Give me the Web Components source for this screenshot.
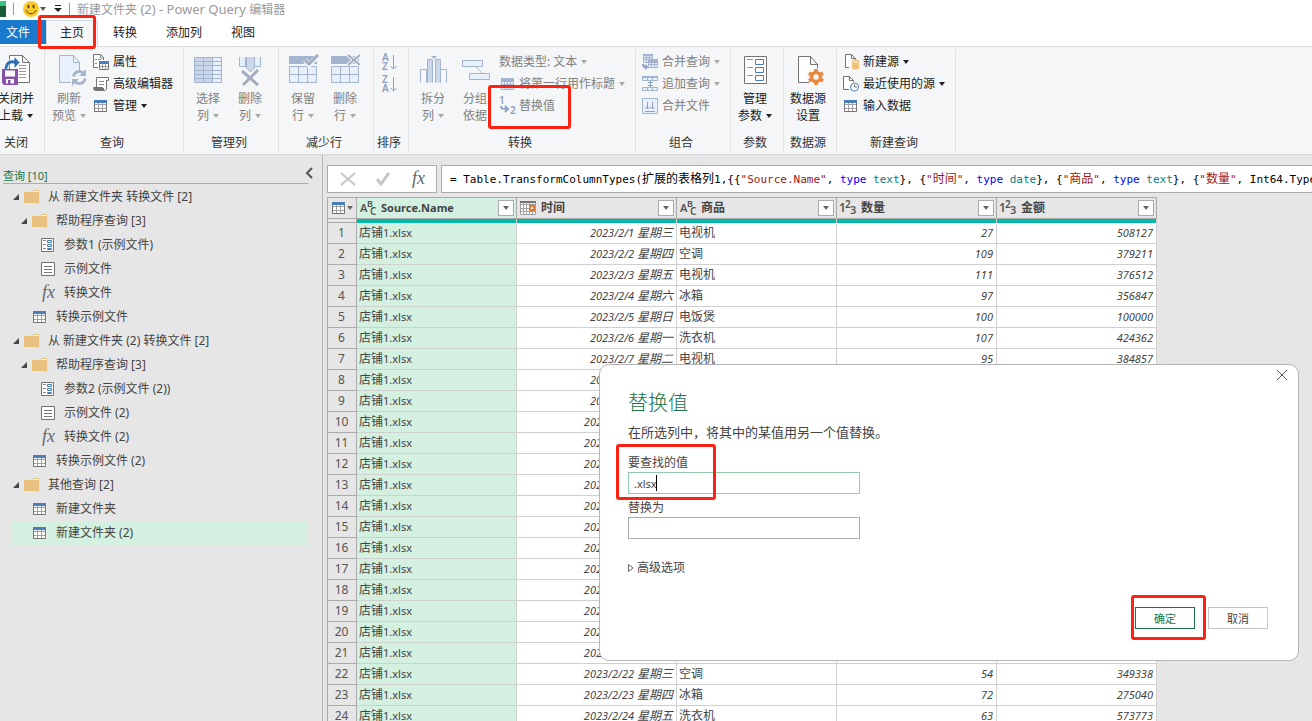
<!DOCTYPE html>
<html lang="zh-CN">
<head>
<meta charset="utf-8">
<title>新建文件夹 (2) - Power Query 编辑器</title>
<style>
html, body {
  height: 100%;
  margin: 0;
}
body {
  overflow: hidden;
  font-family: "Noto Sans", "Noto Sans CJK SC", sans-serif;
  font-size: 12px;
  line-height: 16px;
  color: #444;
  background: #e6e6e6;
}
</style>
</head>
<body>
<pq-app>
  <pq-title-bar slot="title">新建文件夹<span> (2) - Power Query </span>编辑器</pq-title-bar>

  <pq-tabs slot="tabs">
    <pq-tab kind="file">文件</pq-tab>
    <pq-callout style="--inset: -5px 2px -3px -8px"><pq-tab kind="selected">主页</pq-tab></pq-callout>
    <pq-tab>转换</pq-tab>
    <pq-tab>添加列</pq-tab>
    <pq-tab>视图</pq-tab>
  </pq-tabs>

  <pq-ribbon slot="ribbon">
    <pq-group label="关闭">
      <pq-big-button icon="closeLoad" first="关闭并" second="上载" menu></pq-big-button>
    </pq-group>
    <pq-group label="查询">
      <pq-big-button icon="refresh" first="刷新" second="预览" menu disabled></pq-big-button>
      <pq-stack>
        <pq-small-button icon="properties">属性</pq-small-button>
        <pq-small-button icon="script">高级编辑器</pq-small-button>
        <pq-small-button icon="table" menu>管理</pq-small-button>
      </pq-stack>
    </pq-group>
    <pq-group label="管理列">
      <pq-big-button icon="chooseColumns" first="选择" second="列" menu disabled></pq-big-button>
      <pq-big-button icon="removeColumns" first="删除" second="列" menu disabled></pq-big-button>
    </pq-group>
    <pq-group label="减少行">
      <pq-big-button icon="keepRows" first="保留" second="行" menu disabled></pq-big-button>
      <pq-big-button icon="removeRows" first="删除" second="行" menu disabled></pq-big-button>
    </pq-group>
    <pq-group label="排序">
      <pq-stack>
        <pq-small-button icon="sortAsc" title="升序排序" disabled></pq-small-button>
        <pq-small-button icon="sortDesc" title="降序排序" disabled></pq-small-button>
      </pq-stack>
    </pq-group>
    <pq-group label="转换">
      <pq-big-button icon="split" first="拆分" second="列" menu disabled></pq-big-button>
      <pq-big-button icon="groupBy" first="分组" second="依据" disabled></pq-big-button>
      <pq-stack>
        <pq-small-button menu disabled>数据类型: 文本</pq-small-button>
        <pq-small-button icon="promote" menu disabled>将第一行用作标题</pq-small-button>
        <pq-callout style="--inset: -10px -13px -12px -8px"><pq-small-button icon="replace" disabled>替换值</pq-small-button></pq-callout>
      </pq-stack>
    </pq-group>
    <pq-group label="组合">
      <pq-stack>
        <pq-small-button icon="merge" menu disabled>合并查询</pq-small-button>
        <pq-small-button icon="append" menu disabled>追加查询</pq-small-button>
        <pq-small-button icon="combine" disabled>合并文件</pq-small-button>
      </pq-stack>
    </pq-group>
    <pq-group label="参数">
      <pq-big-button icon="parameters" first="管理" second="参数" menu></pq-big-button>
    </pq-group>
    <pq-group label="数据源">
      <pq-big-button icon="sourceSettings" first="数据源" second="设置"></pq-big-button>
    </pq-group>
    <pq-group label="新建查询">
      <pq-stack>
        <pq-small-button icon="newSource" menu>新建源</pq-small-button>
        <pq-small-button icon="recent" menu>最近使用的源</pq-small-button>
        <pq-small-button icon="table">输入数据</pq-small-button>
      </pq-stack>
    </pq-group>
  </pq-ribbon>

  <pq-queries slot="side" heading="查询 [10]">
    <pq-query level="0" icon="folder" open>从 新建文件夹 转换文件 [2]</pq-query>
    <pq-query level="1" icon="folder" open>帮助程序查询 [3]</pq-query>
    <pq-query level="2" icon="paramItem">参数1 (示例文件)</pq-query>
    <pq-query level="2" icon="textItem">示例文件</pq-query>
    <pq-query level="2" icon="fx">转换文件</pq-query>
    <pq-query level="1" icon="table">转换示例文件</pq-query>
    <pq-query level="0" icon="folder" open>从 新建文件夹 (2) 转换文件 [2]</pq-query>
    <pq-query level="1" icon="folder" open>帮助程序查询 [3]</pq-query>
    <pq-query level="2" icon="paramItem">参数2 (示例文件 (2))</pq-query>
    <pq-query level="2" icon="textItem">示例文件 (2)</pq-query>
    <pq-query level="2" icon="fx">转换文件 (2)</pq-query>
    <pq-query level="1" icon="table">转换示例文件 (2)</pq-query>
    <pq-query level="0" icon="folder" open>其他查询 [2]</pq-query>
    <pq-query level="1" icon="table">新建文件夹</pq-query>
    <pq-query level="1" icon="table" selected>新建文件夹 (2)</pq-query>
  </pq-queries>

  <pq-formula-bar slot="main"></pq-formula-bar>
  <pq-grid slot="main"></pq-grid>
  <pq-replace-dialog slot="dialog"></pq-replace-dialog>
</pq-app>

<script>
// faded variants are used by disabled ribbon commands
const LINE = "#737373";
const BLUE = "#4a7ebb";
const FADE = "#a3b4d0";
const PALE = "#e8f0fc";

const grid = (x, y, w, h, cols, rows, stroke) => {
  let d = `M${x} ${y}h${w}v${h}h${-w}z`;
  for (let i = 1; i < cols; i++) d += `M${x + Math.round(w * i / cols)} ${y}v${h}`;
  for (let i = 1; i < rows; i++) d += `M${x} ${y + Math.round(h * i / rows)}h${w}`;
  return `<path d="${d}" stroke="${stroke}"/>`;
};

// [width, height, markup]
const ICONS = {
  closeLoad: [32, 32, `
    <path fill="#fff" stroke="${LINE}" d="M9.500 2.500h13l7 7v20h-20zM22.500 2.500v7h7"/>
    <path stroke="#999" d="M19 12.500h7M19 15.500h7M19 18.500h7M19 21.500h7M19 24.500h7"/>
    <path fill="#2f6fad" stroke="#fff" d="M4 17C4 9 9 6 14 7V3l6 6.500-6 6.500v-5c-4-1-6 1-6.500 6z"/>
    <path fill="#8651a8" d="M2 16h16v16H4l-2-2z"/><path fill="#fff" d="M5 17.500h10v6H5zM6 26h8v4.500H6z"/><path fill="#8651a8" d="M8 27h2.500v4H8z"/>`],
  refresh: [32, 32, `
    <path fill="${PALE}" stroke="${FADE}" d="M6.500 2.500h14l6 7v20h-20zM20.500 2.500v7h6"/>
    <path fill="#f5f6f7" d="M18 18h16v13H18z"/>
    <path stroke="#a5b5ce" stroke-width="3" d="M20.500 23.500c1-6 8-6 10-3M32 25.500c-1 6-8 6-10 3"/>
    <path fill="#a5b5ce" d="M33 16v7h-7zM19 33v-7h7z"/>`],
  chooseColumns: [32, 32, `
    <path fill="${PALE}" d="M2.500 4.500h27v25h-27z"/><path fill="#cbd6e8" d="M2 4h18v26H2z"/>
    ${grid(2.5, 4.5, 27, 25, 3, 6, FADE)}`],
  removeColumns: [32, 32, `
    <path fill="${PALE}" stroke="${FADE}" d="M5.500 4v9.500h6V4M20.500 4v9.500h6V4"/>
    <path fill="#cbd6e8" stroke="${FADE}" d="M12.500 4v11l4 4 4-4V4"/>
    <path stroke="#a3acbd" stroke-width="3" d="M8 18l16 14M24 17L9 32"/>`],
  keepRows: [32, 32, `
    <path fill="${PALE}" d="M2 13h28v17H2z"/><path fill="${FADE}" d="M2 3h28v8H2z"/>
    ${grid(2.5, 13.5, 27, 16, 3, 2, FADE)}
    <path stroke="#f5f6f7" stroke-width="5" d="M18 7l4 5 9-9"/><path stroke="#a3acbd" stroke-width="3" d="M18 7l4 4 9-9"/>`],
  removeRows: [32, 32, `
    <path fill="${PALE}" d="M2 13h28v17H2z"/><path fill="${FADE}" d="M2 3h28v8H2z"/>
    ${grid(2.5, 13.5, 27, 16, 3, 2, FADE)}
    <path stroke="#f5f6f7" stroke-width="4" d="M19 2l12 10M31 2L19 12"/><path stroke="#a3acbd" stroke-width="2" d="M19 2l12 10M31 2L19 12"/>`],
  split: [32, 32, `
    <path fill="#f5f9ff" stroke="${FADE}" d="M3.500 29.500v-13h6v13M23.500 29.500v-13h6v13"/>
    <path fill="#cbd6e8" stroke="${FADE}" d="M10.500 29.500v-23h5v23M18.500 29.500v-23h5v23"/>
    <path fill="${FADE}" d="M14 3h6l-3 3z"/>`],
  groupBy: [32, 32, `
    <path fill="${PALE}" stroke="${FADE}" d="M3.500 7.500h20v6h-20zM10.500 20.500h20v6h-20zM17 14l6 6"/>`],
  parameters: [32, 32, `
    <path fill="#fff" stroke="${LINE}" d="M5.500 3.500h22v27h-22z"/>
    <path stroke="#999" d="M8 6.500h6M8 14.500h6M8 22.500h6"/>
    <path stroke="${BLUE}" d="M16.500 6.500h8v5h-8zM16.500 14.500h8v5h-8zM16.500 22.500h8v5h-8z"/>`],
  sourceSettings: [32, 32, `
    <path fill="#fff" stroke="${LINE}" d="M6.500 3.500h12l7 8v18h-19zM18.500 3.500v8h7"/>
    <circle cx="24" cy="24" r="9" fill="#f5f6f7"/>
    <circle cx="24" cy="24" r="4.500" stroke="#e8893c" stroke-width="3.500"/>
    <path stroke="#e8893c" stroke-width="3.500" d="M24 16v3M24 29v3M17 20l3 2M28 26l3 2M31 20l-3 2M20 26l-3 2"/>`],
  properties: [16, 16, `
    <path fill="#fff" stroke="${LINE}" d="M5 13.500H.5V.5h7l3 3V6"/>
    <path stroke="#888" d="M2 5.500h2M2 9.500h2M5 5.500h3M7.500 1v3h3"/>
    <path fill="#fff" stroke="${LINE}" d="M6.500 7.500h9v8h-9z"/><path fill="${BLUE}" d="M6 7h10v3H6z"/>
    <path stroke="#999" d="M7 12.500h8M9.500 10v5M12.500 10v5"/>`],
  script: [16, 16, `
    <path fill="#fff" stroke="${LINE}" d="M3.500 11V1.500h12v3h-2v8.500c0 1-1 1.500-2 1.500H2.500c-1.500 0-2-1-2-3h9c0 2 .5 3 2 3"/>
    <path stroke="#888" d="M6 5.500h5M6 8.500h5"/><path stroke="${LINE}" stroke-width="2" d="M1 13h10"/>`],
  table: [16, 16, `
    <path fill="#fff" d="M1.500 3h13v11h-13z"/>${grid(1.5, 3.5, 12, 10, 3, 3, "#a0a0a0")}
    <path stroke="${LINE}" d="M1.500 3v10.500h12V3"/><path fill="${BLUE}" d="M1 2h13v3H1z"/>`],
  folder: [16, 16, `<path fill="#fff" stroke="#e9c07d" d="M8.500 3.500l1-2h5v3h-6z"/><path fill="#e9c07d" d="M0 3h15v11H0z"/><path stroke="#fff" d="M9 2.500h5"/>`],
  paramItem: [16, 16, `
    <path fill="#fff" stroke="${LINE}" d="M1.500 1.500h12v13h-12z"/><path stroke="#888" d="M3 3.500h3M3 7.500h3M3 11.500h3"/>
    <path stroke="${BLUE}" d="M7.500 3.500h4v2h-4zM7.500 7.500h4v2h-4zM7.500 11.500h4v1h-4z"/>`],
  textItem: [16, 16, `<path fill="#fff" stroke="${LINE}" d="M1.500 1.500h13v13h-13z"/><path stroke="${LINE}" d="M4 5.500h8M4 8.500h8M4 11.500h8"/>`],
  fx: [16, 16, `<text x="2" y="13" font-family="Liberation Serif" font-style="italic" font-size="18" fill="#666">fx</text>`],
  sortAsc: [16, 16, `
    <text x="2" y="7" font-size="10" font-weight="600" fill="#8ea0c0">A</text><text x="2" y="16" font-size="10" font-weight="600" fill="#8ea0c0">Z</text>
    <path stroke="#8ea0c0" d="M13.500 1v14M10.500 12l3 3 3-3"/>`],
  sortDesc: [16, 16, `
    <text x="2" y="7" font-size="10" font-weight="600" fill="#8ea0c0">Z</text><text x="2" y="16" font-size="10" font-weight="600" fill="#8ea0c0">A</text>
    <path stroke="#8ea0c0" d="M13.500 1v14M10.500 12l3 3 3-3"/>`],
  promote: [16, 16, `<path fill="${PALE}" d="M1 2h14v12H1z"/>${grid(2.5, 2.5, 12, 11, 4, 4, FADE)}<path fill="${FADE}" d="M2 2h13v4H2z"/>`],
  replace: [16, 16, `
    <text x="0" y="6" font-size="10" font-weight="600" fill="#8ea0c0">1</text><text x="11" y="16" font-size="10" font-weight="600" fill="#8ea0c0">2</text>
    <path stroke="#8ea0c0" stroke-width="2" d="M2 8c0 3 1 3 6 3M6 8l3 3-3 3"/>`],
  merge: [16, 16, `
    <path fill="${PALE}" d="M1 1h9v8H1z"/>${grid(1.5, .5, 9, 8, 3, 3, FADE)}<path fill="${FADE}" d="M1 0h10v2H1z"/>
    <path fill="${PALE}" d="M6 6h9v8H6z"/>${grid(6.5, 5.5, 9, 8, 3, 3, FADE)}<path fill="${FADE}" d="M6 5h10v3H6z"/>
    <path stroke="#8ea0c0" stroke-width="2" d="M1 10c0 3 1 3 4 3M3 11l2 2-2 2"/>`],
  append: [16, 16, `
    <path fill="${PALE}" stroke="${FADE}" d="M.5 1.500h15v3H.5zM.5 11.500h15v3H.5zM5.500 1.500v3M10.500 1.500v3M5.500 11.500v3M10.500 11.500v3"/>
    <path fill="${FADE}" d="M0 0h16v2H0z"/><path stroke="#8ea0c0" d="M8.500 5v6M6 6.500h5M6 9.500h5"/>`],
  combine: [16, 16, `
    <path fill="${PALE}" stroke="${FADE}" d="M.5.5h15v15H.5z"/>
    <path stroke="#8ea0c0" d="M5.500 4v7M3.500 9l2 2 2-2M10.500 4v7M8.500 9l2 2 2-2M3 13.500h10"/>`],
  newSource: [16, 16, `
    <path fill="#fff" stroke="${LINE}" d="M6 13.500H2.500V.5h6l4 4V6M8.500.5v4h4"/>
    <path fill="#f0c27b" d="M9 7c0-2 7-2 7 0v7c0 2-7 2-7 0z"/><path stroke="#fff" d="M10 7.500c1 1 4 1 5 0"/>`],
  recent: [16, 16, `
    <path fill="#fff" stroke="${LINE}" d="M6 13.500H.5V.5h6l4 4V6M6.500.5v4h4"/>
    <circle cx="11.500" cy="11" r="4" fill="#fff" stroke="${BLUE}"/><path stroke="${LINE}" d="M11.500 8.500V11H14"/>`],
  typeText: [18, 18, `
    <g font-weight="600" fill="#555"><text x="0" y="13" font-size="11">A</text><text x="7" y="8" font-size="9">B</text><text x="10" y="16" font-size="10">C</text></g>`],
  typeNumber: [18, 18, `
    <g font-weight="600" fill="#555"><text x="-1" y="13" font-size="12">1</text><text x="5" y="9" font-size="10">2</text><text x="10" y="15" font-size="11">3</text></g>`],
  typeDate: [18, 18, `
    <path fill="#fff" d="M1 2h15v14H1z"/>${grid(.5, 2.5, 15, 13, 5, 4, "#a0a0a0")}<path fill="#737373" d="M0 2h16v2H0z"/>
    <path fill="#fff" stroke="#e07a30" stroke-width="2" d="M10 7h4v4h-4z"/>`],
  smiley: [16, 16, `
    <circle cx="8" cy="8" r="8" fill="#fbc92c"/><ellipse cx="5.500" cy="5.500" rx="1" ry="2" fill="#5a4511"/><ellipse cx="10.500" cy="5.500" rx="1" ry="2" fill="#5a4511"/>
    <path stroke="#5a4511" d="M3 9c2 5 8 5 10 0"/>`],
  excel: [16, 16, `<path fill="#21a366" d="M0 0h16v8H0z"/><path fill="#185c37" d="M0 5h16v11H0z"/><path fill="#33c481" d="M10 0h6v5h-6z"/>`],
  customize: [8, 8, `<path fill="#222" d="M1 0h6v1H1zM0 3h8L4 7z"/>`],
  close: [12, 12, `<path stroke="#555" d="M1 1l10 10M11 1L1 11"/>`],
  cancel: [16, 16, `<path stroke="#c6c6c6" stroke-width="2" d="M1 2l14 12M15 2L1 14"/>`],
  commit: [16, 16, `<path stroke="#c6c6c6" stroke-width="3" d="M2 8l4 5 8-11"/>`],
  chevron: [8, 12, `<path stroke="#555" stroke-width="2" d="M7 1L2 6l5 5"/>`],
  arrow: [6, 6, `<path fill="currentColor" d="M0 1h6L3 5z"/>`],
  opened: [6, 6, `<path fill="#444" d="M6 0v6H0z"/>`],
  closed: [6, 10, `<path fill="#fff" stroke="#666" d="M.5 1.500v7L5 5z"/>`]
};

const icon = name => {
  if (!name) return "";
  const [w, h, body] = ICONS[name];
  return `<svg class="icon-${name}" width="${w}" height="${h}" viewBox="0 0 ${w} ${h}" fill="none" aria-hidden="true">${body}</svg>`;
};

const baseCss = `
:host { display: block; box-sizing: border-box; }
*, *::before, *::after { box-sizing: border-box; }
svg { display: block; flex: none; overflow: visible; }
button, input { font: inherit; color: inherit; margin: 0; }
button { border: 0; padding: 0; background: none; }
button:disabled .icon-arrow { color: #a8a8a8; }
`;

class PqElement extends HTMLElement {
  css = "";

  constructor() {
    super();
    this.attachShadow({ mode: "open" });
  }
  connectedCallback() {
    this.shadowRoot.innerHTML = `<style>${baseCss}${this.css}</style>${this.render()}`;
  }
  render() {
    return `<slot></slot>`;
  }
}

class AppComponent extends PqElement {
  css = `
    :host { display: flex; flex-direction: column; height: 100vh; overflow: hidden; position: relative; }
    .body { flex: 1; min-height: 0; display: flex; }
    main { flex: 1; min-width: 0; padding: 10px 0 0 4px; display: flex; flex-direction: column; gap: 4px; overflow: hidden; }
  `;
  render() {
    return `
      <slot name="title"></slot>
      <slot name="tabs"></slot>
      <slot name="ribbon"></slot>
      <div class="body">
        <slot name="side"></slot>
        <main><slot name="main"></slot></main>
      </div>
      <slot name="dialog"></slot>
    `;
  }
}

class TitleBarComponent extends PqElement {
  css = `
    :host { display: flex; align-items: center; height: 20px; padding-bottom: 2px; background: #fff; color: #999; white-space: nowrap; }
    .app { margin-left: -10px; }
    i { width: 1px; height: 12px; margin: 0 7px; background: #999; }
    .app + i { margin-right: 9px; }
    button { display: flex; align-items: center; gap: 1px; color: #555; }
    .more { margin-left: 8px; }
    h1 { margin: 0; font-size: 12px; font-weight: normal; }
    ::slotted(span) { font-size: 13px; }
  `;
  render() {
    return `
      <span class="app">${icon("excel")}</span><i></i>
      <button aria-label="发送微笑">${icon("smiley")}${icon("arrow")}</button>
      <button class="more" aria-label="自定义快速访问工具栏">${icon("customize")}</button><i></i>
      <h1><slot></slot></h1>
    `;
  }
}

class TabsComponent extends PqElement {
  css = `
    :host { display: flex; gap: 1px; height: 27px; background: #fff; border-bottom: 1px solid #dadbdc; }
    ::slotted([kind=file]) { margin: 0 -1px 0 -10px; }
  `;
}

class TabComponent extends PqElement {
  css = `
    :host { height: 27px; color: #222; }
    button { display: block; height: 24px; padding: 1px 14px 0; }
    :host([kind=file]) button { padding: 1px 16px 0; color: #fff; background: #1979ca; }
    :host([kind=selected]) button { height: 27px; padding: 0 13px 2px; border: 1px solid #dadbdc; border-bottom: 0; background: #f5f6f7; }
  `;
  render() {
    return `<button role="tab" aria-selected="${this.getAttribute("kind") === "selected"}"><slot></slot></button>`;
  }
}

// red frame drawn round the slotted control; --inset says how far it reaches
class CalloutComponent extends PqElement {
  css = `
    :host { position: relative; width: fit-content; }
    .frame {
      position: absolute;
      inset: var(--inset, -4px);
      z-index: 5;
      border: 3px solid #fc2312;
      border-radius: 3px;
      pointer-events: none;
    }
  `;
  render() {
    return `<slot></slot><div class="frame"></div>`;
  }
}

class RibbonComponent extends PqElement {
  css = `
    :host { display: flex; height: 108px; padding: 2px 0; margin-left: -8px; background: #f5f6f7; border-bottom: 1px solid #d5d6d7; }
  `;
}

class GroupComponent extends PqElement {
  css = `
    :host { display: flex; flex-direction: column; flex: none; padding: 2px 7px 0 3px; border-right: 1px solid #e0e2e4; color: #333; }
    .items { display: flex; flex: 1; }
    footer { height: 17px; text-align: center; }
  `;
  render() {
    return `<div class="items"><slot></slot></div><footer>${this.getAttribute("label")}</footer>`;
  }
}

class StackComponent extends PqElement {
  css = `:host { display: flex; flex-direction: column; }`;
}

class BigButtonComponent extends PqElement {
  css = `
    button { display: flex; flex-direction: column; align-items: center; gap: 5px; width: 42px; padding-top: 2px; line-height: 17px; color: #222; white-space: nowrap; }
    .line { display: flex; align-items: center; justify-content: center; gap: 4px; }
    button:disabled { color: #808080; }
  `;
  render() {
    return `
      <button ${this.hasAttribute("disabled") ? "disabled" : ""}>
        ${icon(this.getAttribute("icon"))}
        <span>
          <span class="line">${this.getAttribute("first")}</span>
          <span class="line">${this.getAttribute("second")}${this.hasAttribute("menu") ? icon("arrow") : ""}</span>
        </span>
      </button>
    `;
  }
}

class SmallButtonComponent extends PqElement {
  css = `
    button { display: flex; align-items: center; gap: 4px; height: 22px; min-width: 24px; padding: 0 3px; color: #222; white-space: nowrap; }
    button:disabled { color: #808080; }
  `;
  render() {
    return `
      <button ${this.hasAttribute("disabled") ? "disabled" : ""}>
        ${icon(this.getAttribute("icon"))}
        <slot></slot>
        ${this.hasAttribute("menu") ? icon("arrow") : ""}
      </button>
    `;
  }
}

class QueriesComponent extends PqElement {
  css = `
    :host { flex: none; width: 323px; padding: 12px 14px 0 3px; border-right: 1px solid #b8b8b8; }
    header { display: flex; justify-content: space-between; height: 17px; border-bottom: 1px solid #ababab; color: #217346; font-size: 11px; line-height: 18px; }
    header button { align-self: flex-start; margin-right: -5px; }
    .tree { margin: 1px 0 0 8px; }
  `;
  render() {
    return `
      <header><span>${this.getAttribute("heading")}</span><button aria-label="折叠">${icon("chevron")}</button></header>
      <div class="tree" role="tree"><slot></slot></div>
    `;
  }
}

class QueryComponent extends PqElement {
  css = `
    .row { display: flex; align-items: center; height: 24px; padding-left: calc(2px + var(--level) * 8px); white-space: nowrap; }
    :host([selected]) .row { background: #d3f0e0; }
    .toggle { width: 6px; margin-right: 5px; }
    .label { margin-left: 8px; }
  `;
  render() {
    return `
      <div class="row" role="treeitem" style="--level: ${this.getAttribute("level")}">
        <span class="toggle">${this.hasAttribute("open") ? icon("opened") : ""}</span>
        ${icon(this.getAttribute("icon"))}
        <span class="label"><slot></slot></span>
      </div>
    `;
  }
}

class FormulaBarComponent extends PqElement {
  css = `
    :host { display: flex; gap: 4px; height: 28px; flex: none; }
    .tools, .formula { display: flex; align-items: center; background: #fff; border: 1px solid #ababab; }
    .tools { width: 110px; justify-content: space-between; padding: 0 10px 0 12px; }
    .formula {
      flex: 1; min-width: 0; padding-left: 8px; overflow: hidden; border-right: 0;
      color: #000; font: 11px/18px "DejaVu Sans Mono", "Noto Sans CJK SC", monospace; white-space: pre;
    }
    b { font-weight: normal; font-size: 12px; }
    .s { color: #a31515; }
    .k { color: #0000ff; }
    .t { color: #008080; }
  `;
  render() {
    const text = s => `<span class="s">"${s}"</span>`;
    const zh = s => `<b>${s}</b>`;
    const type = t => `<span class="k">type</span> <span class="t">${t}</span>`;
    return `
      <div class="tools">
        <button aria-label="取消">${icon("cancel")}</button>
        <button aria-label="提交">${icon("commit")}</button>
        <button aria-label="插入步骤">${icon("fx")}</button>
      </div>
      <div class="formula" role="textbox" contenteditable="true" aria-label="公式" spellcheck="false"><span>= Table.TransformColumnTypes(${zh("扩展的表格列")}1,{{${text("Source.Name")}, ${type("text")}}, {${text(zh("时间"))}, ${type("date")}}, {${text(zh("商品"))}, ${type("text")}}, {${text(zh("数量"))}, Int64.Type}</span></div>
    `;
  }
}

const COLUMNS = [
  { name: "<small>Source.Name</small>", icon: "typeText", selected: true },
  { name: "时间", icon: "typeDate" },
  { name: "商品", icon: "typeText" },
  { name: "数量", icon: "typeNumber" },
  { name: "金额", icon: "typeNumber" }
];

// day of month -> product, quantity, amount
const SALES = {
  1: ["电视机", 27, 508127],
  2: ["空调", 109, 379211],
  3: ["电视机", 111, 376512],
  4: ["冰箱", 97, 356847],
  5: ["电饭煲", 100, 100000],
  6: ["洗衣机", 107, 424362],
  7: ["电视机", 95, 384857],
  22: ["空调", 54, 349338],
  23: ["冰箱", 72, 275040],
  24: ["洗衣机", 63, 573773]
};

class GridComponent extends PqElement {
  css = `
    table { table-layout: fixed; width: 830px; border-collapse: separate; border-spacing: 0; border-left: 1px solid #ababab; }
    th, td { padding: 0 3px 0 2px; height: 21px; line-height: 20px; border-right: 1px solid #d0d0d0; border-bottom: 1px solid #d0d0d0; white-space: nowrap; overflow: hidden; }
    small { font-size: 11px; }
    thead th { height: 22px; padding: 0 2px 0 3px; background: #e6e6e6; border-color: #ababab; border-top: 1px solid #ababab; text-align: left; }
    th.selected, td.selected { background: #d3f0e0; }
    .head { display: flex; align-items: center; height: 20px; }
    .head .name { flex: 1; margin-left: 3px; }
    .corner { color: #666; }
    .menu { display: grid; place-items: center; width: 16px; height: 16px; background: #fff; border: 1px solid #ababab; color: #666; }
    .quality td { height: 4px; line-height: 0; background: #01b8aa; border-bottom: 0; }
    .quality td:first-child { background: #e6e6e6; border-right-color: #ababab; border-bottom: 1px solid #ababab; }
    tbody td { background: #fff; }
    tbody th { background: #e6e6e6; border-color: #ababab; font-weight: normal; color: #555; text-align: center; }
    .value { text-align: right; font-style: italic; }
  `;
  render() {
    const rows = [];
    for (let day = 1; day <= 24; day++) {
      const [product = "", count = "", amount = ""] = SALES[day] || [];
      const week = "日一二三四五六"[new Date(2023, 1, day).getDay()];
      rows.push(`
        <tr>
          <th scope="row">${day}</th>
          <td class="selected">店铺<small>1.xlsx</small></td>
          <td class="value"><small>2023/2/${day} </small>星期${week}</td>
          <td>${product}</td>
          <td class="value"><small>${count}</small></td>
          <td class="value"><small>${amount}</small></td>
        </tr>`);
    }
    const heads = COLUMNS.map(c => `
      <th scope="col" class="${c.selected ? "selected" : ""}">
        <div class="head">${icon(c.icon)}<span class="name">${c.name}</span><button class="menu" aria-label="筛选">${icon("arrow")}</button></div>
      </th>`).join("");
    return `
      <table>
        <colgroup><col style="width: 29px">${`<col style="width: 160px">`.repeat(COLUMNS.length)}</colgroup>
        <thead>
          <tr><th><button class="head corner" aria-label="表格菜单">${icon("table")}${icon("arrow")}</button></th>${heads}</tr>
          <tr class="quality"><td></td>${"<td></td>".repeat(COLUMNS.length)}</tr>
        </thead>
        <tbody>${rows.join("")}</tbody>
      </table>
    `;
  }
}

class ReplaceDialogComponent extends PqElement {
  css = `
    :host {
      position: absolute; top: 364px; right: 13px; z-index: 4;
      width: 700px; height: 297px; padding: 24px 30px 31px 28px;
      display: flex; flex-direction: column; align-items: flex-start;
      background: #fff; border: 1px solid #b4b4b4; border-radius: 10px;
    }
    .dismiss { position: absolute; top: 4px; right: 10px; }
    h2 { margin: 0; color: #217346; font-size: 20px; line-height: 28px; font-weight: 300; }
    p { margin: 5px 0 12px; font-size: 13px; line-height: 20px; }
    .field { display: flex; flex-direction: column; width: 232px; position: relative; }
    .field label { height: 18px; line-height: 18px; }
    input { width: 100%; height: 22px; padding: 0 5px; border: 1px solid #ababab; background: #fff; font-size: 11px; outline: 0; }
    .active input { border-color: #92ceab; }
    .caret { position: absolute; left: 28px; bottom: 3px; width: 1px; height: 16px; background: #000; }
    pq-callout + .field { margin-top: 5px; }
    .advanced { display: flex; align-items: center; gap: 3px; margin-top: 21px; }
    footer { display: flex; gap: 13px; margin-top: auto; align-self: flex-end; }
    footer button { display: block; width: 60px; height: 22px; padding-top: 1px; border: 1px solid #c6c6c6; font-size: 11px; background: #fff; }
    footer .ok { border-color: #217346; color: #217346; }
  `;
  render() {
    return `
      <button class="dismiss" aria-label="关闭">${icon("close")}</button>
      <h2>替换值</h2>
      <p>在所选列中，将其中的某值用另一个值替换。</p>
      <pq-callout style="--inset: -10px 144px -6px -12px">
        <div class="field active"><label for="find">要查找的值</label><input id="find" value=".xlsx"><span class="caret"></span></div>
      </pq-callout>
      <div class="field"><label for="replace">替换为</label><input id="replace"></div>
      <button class="advanced">${icon("closed")}高级选项</button>
      <footer>
        <pq-callout style="--inset: -12px -11px -11px -4px"><button class="ok">确定</button></pq-callout>
        <button>取消</button>
      </footer>
    `;
  }
}

customElements.define("pq-callout", CalloutComponent);
customElements.define("pq-app", AppComponent);
customElements.define("pq-title-bar", TitleBarComponent);
customElements.define("pq-tabs", TabsComponent);
customElements.define("pq-tab", TabComponent);
customElements.define("pq-ribbon", RibbonComponent);
customElements.define("pq-group", GroupComponent);
customElements.define("pq-stack", StackComponent);
customElements.define("pq-big-button", BigButtonComponent);
customElements.define("pq-small-button", SmallButtonComponent);
customElements.define("pq-queries", QueriesComponent);
customElements.define("pq-query", QueryComponent);
customElements.define("pq-formula-bar", FormulaBarComponent);
customElements.define("pq-grid", GridComponent);
customElements.define("pq-replace-dialog", ReplaceDialogComponent);
</script>
</body>
</html>
